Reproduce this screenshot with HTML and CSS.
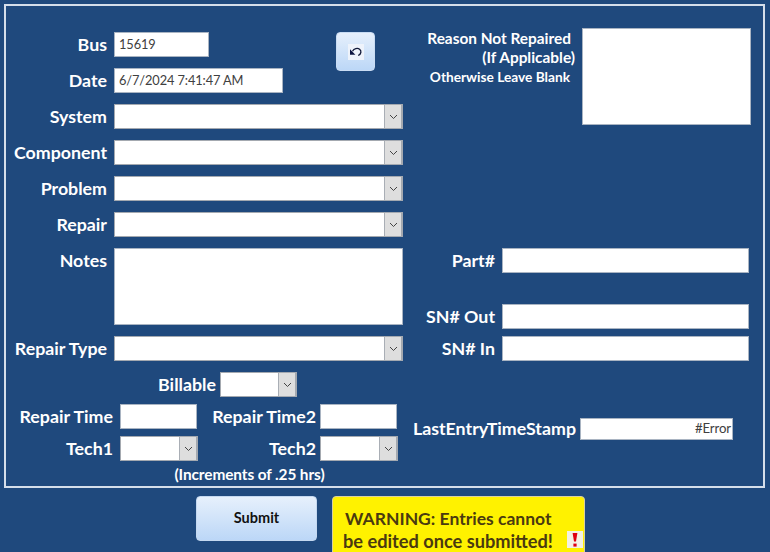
FILE: index.html
```html
<!DOCTYPE html>
<html lang="en">
<head>
<meta charset="utf-8">
<title>Repair Entry</title>
<link rel="stylesheet" href="styles.css">
</head>
<body>
<main class="page">
  <section class="frame">
    <div class="left">
      <div class="top">
        <div class="stack">
          <div class="row"><span class="label">Bus</span><div class="field w-bus"><span class="val">15619</span></div></div>
          <div class="row"><span class="label">Date</span><div class="field w-date"><span class="val">6/7/2024 7:41:47 AM</span></div></div>
        </div>
        <button class="undo" type="button" aria-label="Undo">
          <span class="undo-tile">
            <svg width="14" height="12" viewBox="0 0 14 12"><path d="M3.5 5.2C5 2.6 8.4 1.6 10.6 3.2c2.2 1.7 1.6 5-1.4 6.3" fill="none" stroke="#101838" stroke-width="1.3"/><path d="M1 3.2v5.6h5.4z" fill="#0b1440"/></svg>
          </span>
        </button>
      </div>
      <div class="row"><span class="label">System</span><div class="combo w-full"><span class="drop"><svg width="9" height="6" viewBox="0 0 9 6"><path d="M1 1l3.5 3.5L8 1" fill="none" stroke="#444" stroke-width="1"/></svg></span></div></div>
      <div class="row"><span class="label">Component</span><div class="combo w-full"><span class="drop"><svg width="9" height="6" viewBox="0 0 9 6"><path d="M1 1l3.5 3.5L8 1" fill="none" stroke="#444" stroke-width="1"/></svg></span></div></div>
      <div class="row"><span class="label">Problem</span><div class="combo w-full"><span class="drop"><svg width="9" height="6" viewBox="0 0 9 6"><path d="M1 1l3.5 3.5L8 1" fill="none" stroke="#444" stroke-width="1"/></svg></span></div></div>
      <div class="row"><span class="label">Repair</span><div class="combo w-full"><span class="drop"><svg width="9" height="6" viewBox="0 0 9 6"><path d="M1 1l3.5 3.5L8 1" fill="none" stroke="#444" stroke-width="1"/></svg></span></div></div>
      <div class="row row-top"><span class="label">Notes</span><div class="field w-full h-notes"></div></div>
      <div class="row"><span class="label">Repair Type</span><div class="combo w-full"><span class="drop"><svg width="9" height="6" viewBox="0 0 9 6"><path d="M1 1l3.5 3.5L8 1" fill="none" stroke="#444" stroke-width="1"/></svg></span></div></div>
      <div class="row row-billable"><span class="label">Billable</span><div class="combo w-bill"><span class="drop"><svg width="9" height="6" viewBox="0 0 9 6"><path d="M1 1l3.5 3.5L8 1" fill="none" stroke="#444" stroke-width="1"/></svg></span></div></div>
      <div class="pairs">
        <span class="label">Repair Time</span><div class="field w-time"></div>
        <span class="label">Repair Time2</span><div class="field w-time"></div>
        <span class="label">Tech1</span><div class="combo w-tech"><span class="drop"><svg width="9" height="6" viewBox="0 0 9 6"><path d="M1 1l3.5 3.5L8 1" fill="none" stroke="#444" stroke-width="1"/></svg></span></div>
        <span class="label">Tech2</span><div class="combo w-tech"><span class="drop"><svg width="9" height="6" viewBox="0 0 9 6"><path d="M1 1l3.5 3.5L8 1" fill="none" stroke="#444" stroke-width="1"/></svg></span></div>
      </div>
      <p class="hint">(Increments of .25 hrs)</p>
    </div>
    <div class="right">
      <div class="reason">
        <div class="reason-text">
          <div class="r1">Reason Not Repaired</div>
          <div class="r2">(If Applicable)</div>
          <div class="r3">Otherwise Leave Blank</div>
        </div>
        <div class="field w-reason"></div>
      </div>
      <div class="rrow r-part"><span class="label">Part#</span><div class="field w-part"></div></div>
      <div class="rrow r-out"><span class="label">SN# Out</span><div class="field w-part"></div></div>
      <div class="rrow r-in"><span class="label">SN# In</span><div class="field w-part"></div></div>
      <div class="last"><span class="label">LastEntryTimeStamp</span><div class="field w-last"><span class="err">#Error</span></div></div>
    </div>
  </section>
  <footer class="actions">
    <button class="submit" type="button">Submit</button>
    <div class="warning">
      <div class="w1">WARNING: Entries cannot</div>
      <div class="w2">be edited once submitted!</div>
      <span class="alert"><svg width="8" height="14" viewBox="0 0 8 14"><path d="M1.6 0h4.8L5 8.6H3z" fill="#e00010"/><rect x="2.4" y="10.6" width="3.2" height="3" fill="#e00010"/></svg></span>
    </div>
  </footer>
</main>
</body>
</html>
```

FILE: styles.css
```css
* { box-sizing: border-box; }
html, body { margin: 0; height: 100%; }
body {
  background: #1f497d;
  overflow: hidden;
  font-family: "Lato", "Open Sans", sans-serif;
  color: #fff;
}
.page { padding: 4px 5px 0 4px; height: 552px; overflow: hidden; }
.frame {
  display: flex;
  height: 484px;
  border: 2px solid #d5deea;
}
.left { width: 397px; padding-top: 26px; }
.right { flex: 1; padding-top: 22px; }

.top { display: flex; align-items: flex-start; }
.stack { width: 277px; }
.row { display: flex; align-items: center; margin-bottom: 11px; }
.row-top { align-items: flex-start; }
.label {
  font-weight: 700;
  font-size: 17.8px;
  line-height: 24px;
  margin-bottom: 1px;
  white-space: nowrap;
  text-align: right;
}
.row > .label { width: 101px; margin-right: 7px; flex: none; }
.row-billable { margin-bottom: 7px; }
.row-billable > .label { width: 210px; margin-right: 4px; }

.field, .combo {
  height: 25px;
  background: #fff;
  border: 1px solid #a9b4c2;
  flex: none;
}
.combo { position: relative; border-width: 1px 2px 1px 1px; border-color: #a4a9b0; }
.drop {
  position: absolute;
  top: 0; right: 0; bottom: 0;
  width: 17px;
  background: #dedede;
  border-left: 1px solid #a9aeb5;
  display: flex;
  align-items: center;
  justify-content: center;
}
.val, .err {
  display: block;
  font-size: 12.8px;
  line-height: 23px;
  color: #404040;
  letter-spacing: -0.1px;
  white-space: nowrap;
}
.val { padding-left: 4px; }
.err { font-size: 13.2px; text-align: right; padding-right: 1px; line-height: 19px; }

.w-bus { width: 95px; }
.w-date { width: 169px; }
.w-full { width: 289px; }
.h-notes { height: 77px; }
.w-bill { width: 77px; }
.w-time { width: 77px; }
.w-tech { width: 78px; }
.w-reason { width: 169px; height: 97px; }
.w-part { width: 247px; }
.w-last { width: 153px; height: 22px; }

.undo {
  margin: 0 0 0 53px;
  padding: 0;
  width: 39px;
  height: 39px;
  border: 1px solid #c9dcf3;
  border-radius: 4px;
  background: linear-gradient(#e6f0fc, #bcd7f7);
  display: flex;
  align-items: center;
  justify-content: center;
}
.undo-tile {
  width: 16px;
  height: 16px;
  background: #eef3fb;
  display: flex;
  align-items: center;
  justify-content: center;
}

.pairs {
  display: grid;
  grid-template-columns: 114px 78px 122px 78px;
  grid-auto-rows: 25px;
  row-gap: 7px;
  align-items: center;
}
.pairs .label:nth-child(1), .pairs .label:nth-child(5) { padding-right: 7px; }
.pairs .label:nth-child(3), .pairs .label:nth-child(7) { padding-right: 4px; }
.hint {
  margin: 1px 0 0;
  width: 395px;
  padding-left: 92px;
  text-align: center;
  font-weight: 700;
  font-size: 15.4px;
  letter-spacing: -0.1px;
  line-height: 24px;
}

.reason { display: flex; }
.reason-text { width: 170px; padding-top: 1px; margin-left: 2px; text-align: right; font-weight: 700; }
.r1 { font-size: 15.4px; line-height: 19px; padding-right: 4px; white-space: nowrap; }
.r2 { font-size: 15.4px; line-height: 19px; white-space: nowrap; }
.r3 { font-size: 13.7px; line-height: 19px; padding-right: 5px; white-space: nowrap; }
.reason .field { margin-left: 7px; }

.rrow { display: flex; align-items: center; }
.rrow .label { width: 92px; margin-right: 7px; }
.r-part { margin-top: 123px; }
.r-out { margin-top: 31px; }
.r-in { margin-top: 7px; }
.last { display: flex; align-items: center; margin-top: 55px; margin-left: 4px; }
.last .label { margin-right: 4px; width: 169px; }

.actions { display: flex; align-items: flex-start; padding: 8px 0 0 192px; gap: 15px; }
.submit {
  width: 121px;
  height: 45px;
  padding: 0 0 2px;
  border: 1px solid #c4d8f0;
  border-radius: 4px;
  background: linear-gradient(#e6f0fc, #bcd7f7);
  font: 700 14.5px "Lato", sans-serif;
  color: #111;
}
.warning {
  position: relative;
  width: 253px;
  height: 70px;
  flex: none;
  background: #fff200;
  border: 1px solid #d8d0a0;
  border-radius: 4px 4px 0 0;
  padding: 10px 0 0 10px;
  color: #4a3a10;
  font-weight: 700;
  line-height: 23px;
}
.w1 { padding-left: 2px; font-size: 17.5px; white-space: nowrap; }
.w2 { font-size: 18.2px; white-space: nowrap; }
.alert {
  position: absolute;
  top: 34px;
  right: 1px;
  width: 16px;
  height: 17px;
  background: #f3f1e4;
  display: flex;
  align-items: center;
  justify-content: center;
}
```
